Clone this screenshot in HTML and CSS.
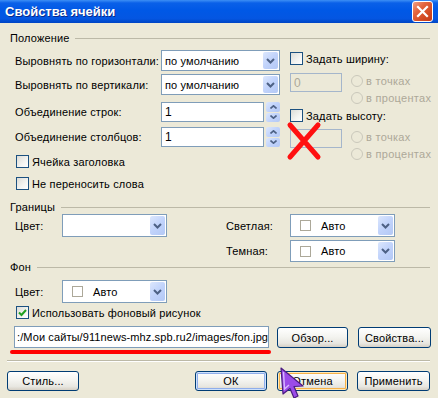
FILE: index.html
```html
<!DOCTYPE html>
<html lang="ru">
<head>
    <meta charset="UTF-8">
    <meta name="viewport" content="width=device-width, initial-scale=1.0">
    <title>Свойства ячейки</title>
    <link rel="stylesheet" href="styles.css">
</head>
<body>
    <div class="window">
        <div class="titlebar">
            <span class="title">Свойства ячейки</span>
            <span class="close">
                <svg width="13" height="13" viewBox="0 0 13 13"><path d="M2 2l9 9M11 2l-9 9" stroke="#fff" stroke-width="2.2" stroke-linecap="square"/></svg>
            </span>
        </div>

        <div class="content">
            <div class="legend">Положение</div>
            <div class="position">
                <div class="pos-left">
                    <div class="row r1">
                        <span class="label">Выровнять по горизонтали:</span>
                        <div class="select">
                            <span>по умолчанию</span>
                            <span class="drop"><svg width="9" height="6" viewBox="0 0 9 6"><path d="M1 1l3.5 3.5L8 1" stroke="#4D6185" stroke-width="2" fill="none"/></svg></span>
                        </div>
                    </div>
                    <div class="row r2">
                        <span class="label">Выровнять по вертикали:</span>
                        <div class="select">
                            <span>по умолчанию</span>
                            <span class="drop"><svg width="9" height="6" viewBox="0 0 9 6"><path d="M1 1l3.5 3.5L8 1" stroke="#4D6185" stroke-width="2" fill="none"/></svg></span>
                        </div>
                    </div>
                    <div class="row r3">
                        <span class="label">Объединение строк:</span>
                        <div class="field">1</div>
                        <div class="spin">
                            <span><svg width="7" height="4" viewBox="0 0 7 4"><path d="M0.5 3.5L3.5 0.8 6.5 3.5" stroke="#4D6185" stroke-width="1.6" fill="none"/></svg></span>
                            <span><svg width="7" height="4" viewBox="0 0 7 4"><path d="M0.5 0.5L3.5 3.2 6.5 0.5" stroke="#4D6185" stroke-width="1.6" fill="none"/></svg></span>
                        </div>
                    </div>
                    <div class="row r4">
                        <span class="label">Объединение столбцов:</span>
                        <div class="field">1</div>
                        <div class="spin">
                            <span><svg width="7" height="4" viewBox="0 0 7 4"><path d="M0.5 3.5L3.5 0.8 6.5 3.5" stroke="#4D6185" stroke-width="1.6" fill="none"/></svg></span>
                            <span><svg width="7" height="4" viewBox="0 0 7 4"><path d="M0.5 0.5L3.5 3.2 6.5 0.5" stroke="#4D6185" stroke-width="1.6" fill="none"/></svg></span>
                        </div>
                    </div>
                    <div class="check-row c1"><span class="check"></span>Ячейка заголовка</div>
                    <div class="check-row c2"><span class="check"></span>Не переносить слова</div>
                </div>

                <div class="pos-right">
                    <div class="check-row w1"><span class="check"></span>Задать ширину:</div>
                    <div class="size-group g1">
                        <div class="size-field">0</div>
                        <div class="radios">
                            <div class="radio-row"><span class="radio"></span>в точках</div>
                            <div class="radio-row"><span class="radio"></span>в процентах</div>
                        </div>
                    </div>
                    <div class="check-row w2"><span class="check"></span>Задать высоту:</div>
                    <div class="size-group g2">
                        <div class="size-field"></div>
                        <div class="radios">
                            <div class="radio-row"><span class="radio"></span>в точках</div>
                            <div class="radio-row"><span class="radio"></span>в процентах</div>
                        </div>
                    </div>
                </div>
            </div>

            <div class="legend l-borders">Границы</div>
            <div class="borders">
                <span class="b-label">Цвет:</span>
                <div class="select tall b-color">
                    <span></span>
                    <span class="drop"><svg width="9" height="6" viewBox="0 0 9 6"><path d="M1 1l3.5 3.5L8 1" stroke="#4D6185" stroke-width="2" fill="none"/></svg></span>
                </div>
                <span class="b-side">Светлая:</span>
                <div class="select tall b-pick">
                    <span class="swatch"></span><span>Авто</span>
                    <span class="drop"><svg width="9" height="6" viewBox="0 0 9 6"><path d="M1 1l3.5 3.5L8 1" stroke="#4D6185" stroke-width="2" fill="none"/></svg></span>
                </div>
                <span class="b-side">Темная:</span>
                <div class="select tall b-pick">
                    <span class="swatch"></span><span>Авто</span>
                    <span class="drop"><svg width="9" height="6" viewBox="0 0 9 6"><path d="M1 1l3.5 3.5L8 1" stroke="#4D6185" stroke-width="2" fill="none"/></svg></span>
                </div>
            </div>

            <div class="legend l-back">Фон</div>
            <div class="row back-color">
                <span class="label short">Цвет:</span>
                <div class="select tall">
                    <span class="swatch"></span><span>Авто</span>
                    <span class="drop"><svg width="9" height="6" viewBox="0 0 9 6"><path d="M1 1l3.5 3.5L8 1" stroke="#4D6185" stroke-width="2" fill="none"/></svg></span>
                </div>
            </div>
            <div class="check-row c3">
                <span class="check"><svg width="11" height="11" viewBox="0 0 11 11"><path d="M2 5.5l2.5 2.5L9 3" stroke="#21A121" stroke-width="2" fill="none"/></svg></span>Использовать фоновый рисунок
            </div>
            <div class="path-row">
                <div class="path">:/Мои сайты/911news-mhz.spb.ru2/images/fon.jpg<span class="caret"></span></div>
                <button class="btn">Обзор...</button>
                <button class="btn">Свойства...</button>
            </div>
            <div class="separator"></div>
            <div class="buttons">
                <button class="btn">Стиль...</button>
                <button class="btn ok">ОК</button>
                <button class="btn hover">Отмена</button>
                <button class="btn">Применить</button>
            </div>
        </div>

        <!-- annotations drawn over the dialog -->
        <svg class="mark-x" width="40" height="44" viewBox="0 0 40 44"><path d="M6 4l28 32M34 4L6 36" stroke="#FF1010" stroke-width="5" stroke-linecap="round"/></svg>
        <div class="underline"></div>
        <svg class="pointer" width="30" height="32" viewBox="0 0 30 32"><path d="M2 1L24 19 15 19.5 19 29 15 31 11 21.5 4 27Z" fill="#9B4BE8" stroke="#4A1C80" stroke-width="1.2" stroke-linejoin="round"/><path d="M4.5 5L5.5 22 10 18" stroke="#D7B8FF" stroke-width="1.4" fill="none"/></svg>
    </div>
</body>
</html>
```

FILE: styles.css
```css
body {
    margin: 0;
    background: #ECE9D8;
    font-family: 'Liberation Sans', Arial, sans-serif;
    font-size: 11px;
    letter-spacing: 0.15px;
    color: #000;
}
.window {
    position: relative;
    width: 438px;
    height: 398px;
    overflow: hidden;
    background: #ECE9D8;
}
.titlebar {
    height: 23px;
    display: flex;
    align-items: center;
    justify-content: space-between;
    padding: 0 5px 0 5px;
    background: linear-gradient(#3D8FF5 0, #0A60E8 3px, #0058E6 45%, #0456E2 80%, #0045C4 100%);
}
.title {
    color: #fff;
    font-weight: bold;
    font-size: 13px;
    letter-spacing: 0;
    text-shadow: 1px 1px 0 #0A2A8A;
}
.close {
    width: 19px;
    height: 19px;
    border: 1px solid #fff;
    border-radius: 3px;
    background: linear-gradient(135deg, #F0A084 0, #E3643E 35%, #D24A22 70%, #C3391A 100%);
    display: flex;
    align-items: center;
    justify-content: center;
}
.content {
    padding: 0 8px 0 10px;
    white-space: nowrap;
}
.legend {
    display: flex;
    align-items: center;
    height: 14px;
    margin-top: 8px;
}
.legend::after {
    content: "";
    flex: 1;
    height: 1px;
    background: #BCB9A7;
    margin-left: 6px;
}
.position {
    display: flex;
    margin-top: 5px;
}
.pos-left {
    width: 265px;
    flex: none;
    padding-left: 5px;
}
.pos-right {
    margin-left: 10px;
}
.row {
    display: flex;
    align-items: center;
}
.label {
    width: 146px;
    flex: none;
}
.label.short {
    width: 47px;
}
.r1 { height: 21px; }
.r2 { height: 21px; margin-top: 3px; }
.r3 { height: 20px; margin-top: 7px; }
.r4 { height: 20px; margin-top: 5px; }
.select {
    box-sizing: border-box;
    width: 119px;
    height: 21px;
    border: 1px solid #7F9DB9;
    background: #fff;
    display: flex;
    align-items: center;
    padding-left: 3px;
    flex: none;
}
.select.tall {
    width: 105px;
    height: 23px;
}
.drop {
    align-self: stretch;
    width: 15px;
    margin: 1px 1px 1px auto;
    border-radius: 2px;
    background: linear-gradient(135deg, #DCE7FD 0, #C1D3FB 50%, #B3C8F5 100%);
    display: flex;
    align-items: center;
    justify-content: center;
}
.swatch {
    width: 9px;
    height: 9px;
    border: 1px solid #ACA899;
    margin: 0 10px 0 6px;
}
.field {
    box-sizing: border-box;
    width: 103px;
    height: 20px;
    border: 1px solid #7F9DB9;
    background: #fff;
    padding-left: 3px;
    display: flex;
    align-items: center;
    font-size: 12px;
}
.spin {
    width: 14px;
    height: 20px;
    margin-left: 2px;
    display: flex;
    flex-direction: column;
    gap: 1px;
}
.spin span {
    flex: 1;
    border-radius: 2px;
    background: linear-gradient(135deg, #DCE7FD 0, #C1D3FB 50%, #B3C8F5 100%);
    display: flex;
    align-items: center;
    justify-content: center;
}
.check-row {
    display: flex;
    align-items: center;
    height: 13px;
}
.check {
    box-sizing: border-box;
    width: 13px;
    height: 13px;
    border: 1px solid #1C5180;
    background: linear-gradient(135deg, #DCDCD7 0, #F4F4F1 60%, #fff 100%);
    margin-right: 3px;
    display: flex;
    align-items: center;
    justify-content: center;
    flex: none;
}
.c1 { margin-top: 8px; padding-left: 1px; }
.c2 { margin-top: 9px; padding-left: 1px; }
.w1 { margin-top: 2px; }
.w2 { margin-top: 5px; }
.size-group {
    display: flex;
}
.g1 { margin-top: 8px; }
.g2 { margin-top: 7px; }
.size-field {
    box-sizing: border-box;
    width: 52px;
    height: 19px;
    border: 1px solid #A5B6CB;
    color: #ACA899;
    padding-left: 3px;
    display: flex;
    align-items: center;
    font-size: 12px;
    flex: none;
}
.radios {
    margin-left: 9px;
    margin-top: 2px;
    display: flex;
    flex-direction: column;
    gap: 5px;
}
.radio-row {
    display: flex;
    align-items: center;
    height: 12px;
    color: #ACA899;
    letter-spacing: 0.3px;
}
.radio {
    box-sizing: border-box;
    width: 12px;
    height: 12px;
    border: 1px solid #CAC8BB;
    border-radius: 50%;
    margin-right: 3px;
    flex: none;
}
.l-borders { margin-top: 10px; }
.borders {
    display: grid;
    grid-template-columns: 47px 105px 59px 64px 105px;
    grid-template-rows: 23px 22px;
    row-gap: 3px;
    align-items: center;
    padding-left: 5px;
}
.b-label { grid-column: 1; grid-row: 1; }
.b-color { grid-column: 2; grid-row: 1; }
.b-side { grid-column: 4; }
.b-pick { grid-column: 5; }
.borders .select.tall {
    height: 100%;
}
.l-back {
    height: 12px;
    margin-top: -1px;
}
.back-color {
    margin-top: 7px;
    padding-left: 5px;
}
.c3 {
    margin-top: 3px;
    padding-left: 6px;
}
.path-row {
    display: flex;
    align-items: flex-start;
    margin-top: 7px;
    padding-left: 4px;
}
.path {
    box-sizing: border-box;
    width: 255px;
    height: 22px;
    border: 1px solid #7F9DB9;
    background: #fff;
    padding-left: 2px;
    display: flex;
    align-items: center;
    overflow: hidden;
    flex: none;
    letter-spacing: 0.1px;
}
.caret {
    width: 1px;
    height: 14px;
    background: #000;
    margin-left: 1px;
    flex: none;
}
.btn {
    box-sizing: border-box;
    height: 21px;
    border: 1px solid #003C74;
    border-radius: 3px;
    background: linear-gradient(#FFFFFF 0, #F4F4F0 45%, #E8E7E1 80%, #D6D0C5 100%);
    font-family: inherit;
    font-size: 11px;
    letter-spacing: 0.15px;
    color: #000;
    padding: 0;
    flex: none;
}
.path-row .btn {
    margin-top: 1px;
    margin-left: 8px;
    width: 71px;
}
.path-row .btn + .btn {
    margin-left: 10px;
    width: 73px;
}
.separator {
    margin: 12px 0 0 -3px;
    height: 1px;
    background: #BCB9A7;
    border-bottom: 1px solid #fff;
}
.buttons {
    display: flex;
    margin-top: 9px;
    margin-left: -3px;
}
.buttons .btn {
    width: 72px;
    height: 20px;
}
.buttons .ok {
    margin-left: auto;
    box-shadow: inset 0 0 0 1px #CEE1FC, inset 0 0 0 2px #8FAEEB;
}
.buttons .hover {
    margin-left: 10px;
    width: 71px;
    box-shadow: inset 0 0 0 1px #FFE9B8, inset 0 0 0 2px #F6B24A;
}
.buttons .hover + .btn {
    margin-left: 9px;
    width: 73px;
}
.mark-x {
    position: absolute;
    left: 284px;
    top: 121px;
}
.underline {
    position: absolute;
    left: 10px;
    top: 350px;
    width: 261px;
    height: 4px;
    border-radius: 2px;
    background: #FF0000;
}
.pointer {
    position: absolute;
    left: 279px;
    top: 367px;
}
```
